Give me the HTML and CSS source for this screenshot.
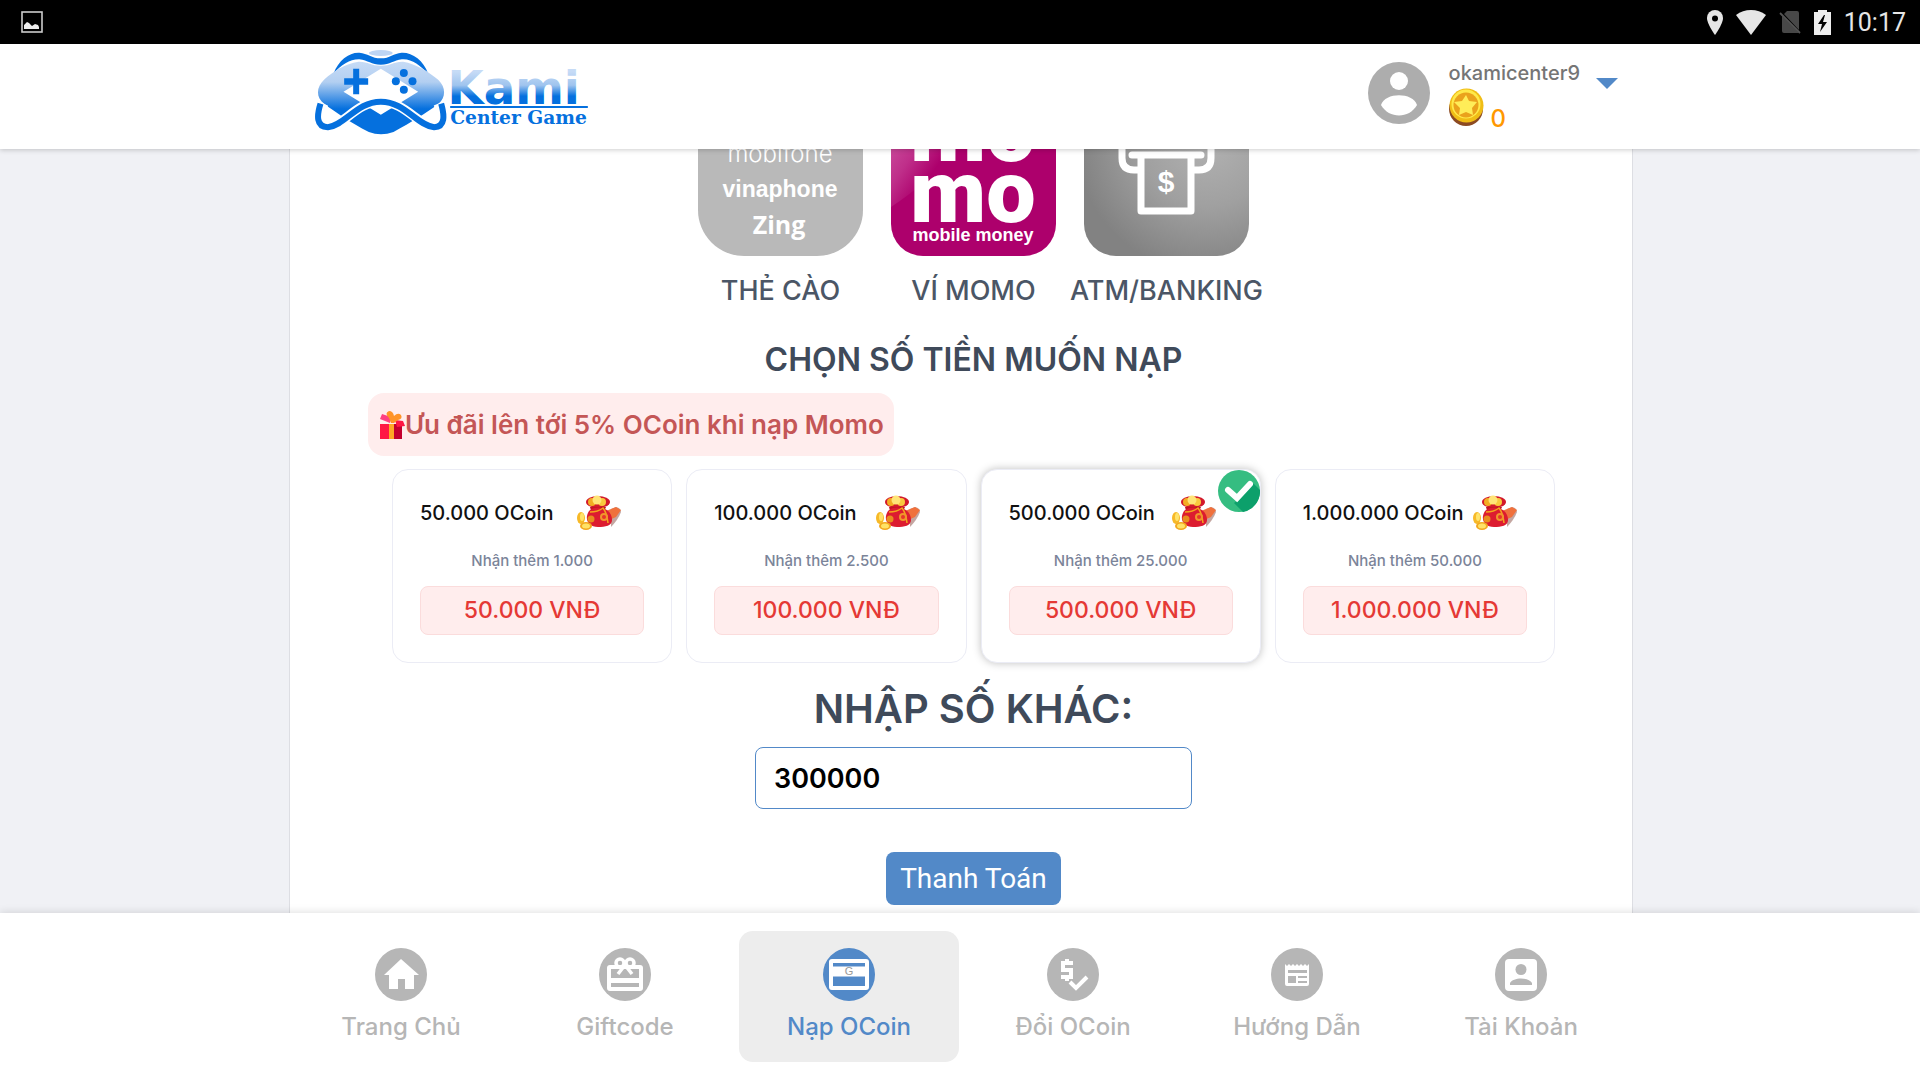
FILE: index.html
```html
<!DOCTYPE html>
<html lang="vi">

<head>
    <meta charset="UTF-8">
    <title>Nạp OCoin</title>
    <link rel="stylesheet" href="styles.css">
</head>

<body>
    <div class="status-bar">
        <svg width="22" height="22" viewBox="0 0 22 22">
            <rect x="1" y="1" width="20" height="20" fill="none" stroke="#ccc" stroke-width="1.6" />
            <path d="M3 18v-4l3-3 2 1 3 3 3-2 3 1 1 2v2z" fill="#eee" />
        </svg>
        <div class="status-right">
            <svg width="16" height="25" viewBox="0 0 16 25">
                <path d="M8 0a8 8 0 0 0-8 8c0 6 8 17 8 17s8-11 8-17a8 8 0 0 0-8-8z" fill="#e6e6e6" />
                <circle cx="8" cy="8.500" r="3" fill="#000" />
            </svg>
            <svg width="30" height="25" viewBox="0 0 30 25">
                <path d="M0 5a25 25 0 0 1 30 0L15 25z" fill="#e6e6e6" />
            </svg>
            <svg width="22" height="24" viewBox="0 0 22 24">
                <path d="M8 1h10a2 2 0 0 1 2 2v17L5 4zM3 6l17 17H5a2 2 0 0 1-2-2z" fill="#484848" />
                <path d="M1 3l20 20" stroke="#555" stroke-width="1.800" />
            </svg>
            <svg width="17" height="25" viewBox="0 0 17 25">
                <path d="M4 0h9v2h4v23H0V2h4z" fill="#eee" />
                <path d="M10 5l-6 9h4l-2 8 7-10H9l2-7z" fill="#000" />
            </svg>
            <span class="clock">10:17</span>
        </div>
    </div>

    <header class="header">
        <div class="header-inner">
            <a href="#" class="logo" aria-label="Okami Center Game">
                <svg width="277" height="85" viewBox="75 32 830 255">
                    <defs>
                        <linearGradient id="padFill" x1="0" y1="0" x2="0" y2="1">
                            <stop offset="0" stop-color="#c6dbf6" />
                            <stop offset=".28" stop-color="#b3cff1" />
                            <stop offset=".65" stop-color="#0570de" />
                            <stop offset="1" stop-color="#0570de" />
                        </linearGradient>
                        <linearGradient id="nameFill" x1="0" y1="0" x2="0" y2="1">
                            <stop offset=".2" stop-color="#c6dbf6" />
                            <stop offset=".45" stop-color="#9fc4ee" />
                            <stop offset=".65" stop-color="#0570de" />
                        </linearGradient>
                    </defs>
                    <ellipse cx="272" cy="41" rx="36" ry="9" fill="#bdd5f4" />
                    <path d="M130 103C145 62 178 38 208 40C232 42 245 57 272 57S310 42 334 40C365 38 400 62 414 103C390 78 363 57 335 60C310 63 300 76 272 76S233 63 208 60C180 59 153 76 130 103z" fill="#0570de" />
                    <path fill-rule="evenodd" d="M103 120C130 95 165 73 205 67C235 66 240 79 272 79S310 66 339 67C378 73 418 99 444 121C468 143 467 175 445 193C410 220 364 248 310 278Q272 292 236 278C180 249 138 220 102 193C78 175 76 145 103 120zM272 88L160 157L272 226L384 157z" fill="url(#padFill)" />
                    <path d="M101 193C85 225 77 265 115 264C165 255 200 187 272 187S380 255 432 264C468 263 458 225 444 193" fill="none" stroke="#fff" stroke-width="29" />
                    <path d="M91 193C80 228 77 262 113 264C165 258 200 187 272 187S380 258 432 264C466 262 463 228 453 193" fill="none" stroke="#0570de" stroke-width="18" />
                    <path d="M189 88h18v29h27v19h-27v29h-18v-29h-27v-19h27z" fill="#0570de" />
                    <g fill="#0570de">
                        <circle cx="341" cy="101" r="12" />
                        <circle cx="317" cy="126" r="12" />
                        <circle cx="367" cy="126" r="12" />
                        <circle cx="341" cy="151" r="12" />
                    </g>
                    <text x="472" y="194" class="logo-name" fill="url(#nameFill)">Kami</text>
                    <path d="M480 203H893" stroke="#0570de" stroke-width="6" />
                    <text x="480" y="255" class="logo-sub" fill="#0570de">Center Game</text>
                </svg>
            </a>
            <div class="user">
                <svg class="avatar" width="62" height="62" viewBox="0 0 62 62">
                    <circle cx="31" cy="31" r="31" fill="#adadad" />
                    <circle cx="31" cy="19" r="9" fill="#fff" />
                    <path d="M13 43c4-13 32-13 36 0-8 14-28 14-36 0z" fill="#fff" />
                </svg>
                <div class="user-info">
                    <span class="user-name">okamicenter9</span>
                    <div class="balance">
                        <svg width="35" height="39" viewBox="0 0 35 39">
                            <circle cx="17" cy="21" r="17" fill="#8c4a22" />
                            <circle cx="17.500" cy="17.500" r="17" fill="#f0bd16" />
                            <circle cx="17" cy="16" r="14.500" fill="#ffe94a" />
                            <circle cx="17" cy="17" r="12.500" fill="#eaa21c" />
                            <path d="M17 7l3 6 8 1-5 6 1 7-7-3-7 3 1-7-6-6 8-1z" fill="#ffed58" />
                        </svg>
                        <span>0</span>
                    </div>
                </div>
                <button type="button" class="caret" aria-label="Menu">
                    <svg width="22" height="11" viewBox="0 0 22 11">
                        <path d="M0 0h22L11 11z" fill="#5289c8" />
                    </svg>
                </button>
            </div>
        </div>
    </header>

    <svg width="0" height="0" class="symbols">
        <symbol id="bag" viewBox="0 0 44 36">
            <path d="M34 14l5-2q5 1 5 5-3 8-10 15z" fill="#9d6b63" opacity=".6" />
            <path d="M29 16l10-4 5 3-5 7-9 4z" fill="#f0713c" />
            <ellipse cx="21" cy="7" rx="12" ry="6" fill="#d3192b" />
            <path d="M13 12h16l-3 7H15z" fill="#c11424" />
            <circle cx="15" cy="7" r="4" fill="#f3ad23" />
            <circle cx="25" cy="7" r="4" fill="#f9c93e" />
            <circle cx="20" cy="5" r="4.500" fill="#ffe577" />
            <path d="M12 16C18 10 31 12 34 20c4 10-4 12-13 12-10 0-14-8-9-16z" fill="#dc1c30" />
            <path d="M13 17q8 0 13-4 4 5 5 15" fill="none" stroke="#f3a51c" stroke-width="1.500" />
            <circle cx="27" cy="22" r="4" fill="#f0952b" />
            <circle cx="27" cy="22" r="2" fill="#e8352a" />
            <ellipse cx="4" cy="23" rx="4" ry="6" fill="#f7b928" />
            <ellipse cx="5" cy="22" rx="2" ry="4" fill="#ffe46b" />
            <circle cx="14" cy="24" r="3.500" fill="#e98c1e" />
            <ellipse cx="9" cy="31" rx="6" ry="4" fill="#f2a81f" />
            <ellipse cx="9" cy="31" rx="4" ry="2.500" fill="#ffe266" />
        </symbol>
    </svg>

    <main class="main">
        <div class="panel">
            <div class="methods">
                <a href="#" class="method">
                    <svg width="165" height="165" viewBox="0 0 165 165">
                        <rect width="165" height="165" rx="46" fill="#b9b9b9" />
                        <g fill="#fff" text-anchor="middle">
                            <text x="82" y="71" class="t-mobi">mobifone</text>
                            <text x="82" y="106" class="t-vina">vinaphone</text>
                            <text x="81" y="143" class="t-zing">Zing</text>
                        </g>
                    </svg>
                    <span>THẺ CÀO</span>
                </a>
                <a href="#" class="method">
                    <svg width="165" height="165" viewBox="0 0 165 165">
                        <defs>
                            <linearGradient id="momoShine" x1="0" y1=".2" x2=".5" y2=".6">
                                <stop offset="0" stop-color="#d05ba5" />
                                <stop offset=".6" stop-color="#bf2f8a" />
                                <stop offset="1" stop-color="#ad006c" />
                            </linearGradient>
                        </defs>
                        <rect width="165" height="165" rx="32" fill="#ad006c" />
                        <path d="M0 32A32 32 0 0 1 32 0H100Q70 70 0 116z" fill="url(#momoShine)" />
                        <g fill="#fff" text-anchor="middle">
                            <text x="82" y="70" class="t-momo">mo</text>
                            <text x="82" y="131" class="t-momo">mo</text>
                            <text x="82" y="150" class="t-money">mobile money</text>
                        </g>
                    </svg>
                    <span>VÍ MOMO</span>
                </a>
                <a href="#" class="method">
                    <svg width="165" height="165" viewBox="0 0 165 165">
                        <defs>
                            <radialGradient id="atmFill" cx=".75" cy=".3" r=".8">
                                <stop offset="0" stop-color="#b2b2b2" />
                                <stop offset=".5" stop-color="#a0a0a0" />
                                <stop offset="1" stop-color="#828282" />
                            </radialGradient>
                        </defs>
                        <rect width="165" height="165" rx="32" fill="url(#atmFill)" />
                        <g fill="none" stroke="#fff" stroke-width="7" stroke-linecap="round" stroke-linejoin="round">
                            <path d="M56 79h-6Q38 79 38 67V40h89v27q0 12-12 12h-6" />
                            <path d="M48 64h69M57 64v56h50V64" />
                        </g>
                        <text x="82" y="101" class="t-dollar" fill="#fff" text-anchor="middle">$</text>
                    </svg>
                    <span>ATM/BANKING</span>
                </a>
            </div>

            <h2 class="title">CHỌN SỐ TIỀN MUỐN NẠP</h2>

            <div class="promo">
                <svg width="25" height="28" viewBox="0 0 25 28">
                    <path d="M0 13h9v15H0z" fill="#ff1744" />
                    <path d="M9 13h5v15H9z" fill="#ffa726" />
                    <path d="M14 13h8v15h-8z" fill="#c4002f" />
                    <path d="M2 3l9 3-1 6-10-4z" fill="#ff4081" />
                    <path d="M15 9l8 1 2 5-8 1z" fill="#ff1744" />
                    <path d="M11 12L9 7q-5-5 0-7 4 0 5 5 4-4 7-1 2 4-3 5l-4 3z" fill="#ff9427" />
                </svg>
                <span>Ưu đãi lên tới 5% OCoin khi nạp Momo</span>
            </div>

            <div class="cards">
                <button type="button" class="card">
                    <span class="card-head"><span>50.000 OCoin</span><svg width="44" height="36"><use href="#bag" /></svg></span>
                    <span class="card-bonus">Nhận thêm 1.000</span>
                    <span class="card-price">50.000 VNĐ</span>
                </button>
                <button type="button" class="card">
                    <span class="card-head"><span>100.000 OCoin</span><svg width="44" height="36"><use href="#bag" /></svg></span>
                    <span class="card-bonus">Nhận thêm 2.500</span>
                    <span class="card-price">100.000 VNĐ</span>
                </button>
                <button type="button" class="card active">
                    <svg class="check" width="42" height="42" viewBox="0 0 42 42">
                        <circle cx="21" cy="21" r="21" fill="#35bd81" />
                        <path d="M20 30L35 13l7 7a21 21 0 0 1-17 22l-9-9z" fill="#0ca06b" />
                        <path d="M10 20l9 8 13-14" fill="none" stroke="#fff" stroke-width="6" stroke-linecap="round" />
                    </svg>
                    <span class="card-head"><span>500.000 OCoin</span><svg width="44" height="36"><use href="#bag" /></svg></span>
                    <span class="card-bonus">Nhận thêm 25.000</span>
                    <span class="card-price">500.000 VNĐ</span>
                </button>
                <button type="button" class="card">
                    <span class="card-head"><span>1.000.000 OCoin</span><svg width="44" height="36"><use href="#bag" /></svg></span>
                    <span class="card-bonus">Nhận thêm 50.000</span>
                    <span class="card-price">1.000.000 VNĐ</span>
                </button>
            </div>

            <form class="other">
                <label for="amount">NHẬP SỐ KHÁC:</label>
                <input type="text" id="amount" value="300000">
                <button type="button" id="payBtn">Thanh Toán</button>
            </form>
        </div>
    </main>

    <nav class="nav">
        <a href="#" class="nav-item">
            <svg width="52" height="53" viewBox="0 0 52 53">
                <ellipse cx="26" cy="26.500" rx="26" ry="26.500" fill="currentColor" />
                <path d="M26 11l18 16h-5v14h-9V31h-7v10h-9V27H9z" fill="#fff" />
            </svg>
            <span>Trang Chủ</span>
        </a>
        <a href="#" class="nav-item">
            <svg width="52" height="53" viewBox="0 0 52 53">
                <ellipse cx="26" cy="26.500" rx="26" ry="26.500" fill="currentColor" />
                <rect x="10" y="19" width="32" height="22" rx="1" fill="none" stroke="#fff" stroke-width="4" />
                <path d="M10 32.500h32" stroke="#fff" stroke-width="5" />
                <g fill="none" stroke="#fff" stroke-width="3.500">
                    <circle cx="21" cy="15" r="4" />
                    <circle cx="31" cy="15" r="4" />
                    <path d="M26 17l-7 9M26 17l7 9" />
                </g>
            </svg>
            <span>Giftcode</span>
        </a>
        <a href="#" class="nav-item active">
            <svg width="52" height="53" viewBox="0 0 52 53">
                <ellipse cx="26" cy="26.500" rx="26" ry="26.500" fill="currentColor" />
                <rect x="8" y="13" width="36" height="27" rx="1" fill="none" stroke="#fff" stroke-width="4" />
                <path d="M8 23.500h36" stroke="#fff" stroke-width="10" />
                <text x="26" y="27" class="t-card" fill="#999" text-anchor="middle">G</text>
            </svg>
            <span>Nạp OCoin</span>
        </a>
        <a href="#" class="nav-item">
            <svg width="52" height="53" viewBox="0 0 52 53">
                <ellipse cx="26" cy="26.500" rx="26" ry="26.500" fill="currentColor" />
                <path d="M26 15H16v7h8v7H14M20 11v4M20 29v4" fill="none" stroke="#fff" stroke-width="4" />
                <path d="M23 34l6 6 11-11" fill="none" stroke="#fff" stroke-width="4" />
            </svg>
            <span>Đổi OCoin</span>
        </a>
        <a href="#" class="nav-item">
            <svg width="52" height="53" viewBox="0 0 52 53">
                <ellipse cx="26" cy="26.500" rx="26" ry="26.500" fill="currentColor" />
                <path d="M14 16l2 2 2-2 2 2 2-2 2 2 2-2 2 2 2-2 2 2 2-2 2 2 2-2v20q0 2-2 2H16q-2 0-2-2z" fill="#fff" />
                <path d="M17 22h19v3H17zM17 28h8v7h-8zM27 28h9v2h-9zM27 33h9v2h-9z" fill="currentColor" />
            </svg>
            <span>Hướng Dẫn</span>
        </a>
        <a href="#" class="nav-item">
            <svg width="52" height="53" viewBox="0 0 52 53">
                <ellipse cx="26" cy="26.500" rx="26" ry="26.500" fill="currentColor" />
                <rect x="10" y="11" width="32" height="32" rx="4" fill="#fff" />
                <circle cx="26" cy="21.500" r="5.500" fill="currentColor" />
                <path d="M15 37v-2c3-6 19-6 22 0v2z" fill="currentColor" />
            </svg>
            <span>Tài Khoản</span>
        </a>
    </nav>
</body>

</html>
```
FILE: styles.css
```css
* {
    padding: 0;
    margin: 0;
    box-sizing: border-box;
}

body {
    display: flex;
    flex-direction: column;
    height: 100vh;
    overflow: hidden;
    background-color: #f0f1f5;
    font-family: Inter, "Noto Sans", sans-serif;
    font-weight: 500;
    color: #3f4a5a;
}

a {
    color: inherit;
    text-decoration: none;
}

button {
    border: none;
    background: none;
    font: inherit;
    cursor: pointer;
}

svg {
    display: block;
    flex-shrink: 0;
}

.symbols {
    position: absolute;
}

/* status bar */
.status-bar {
    display: flex;
    align-items: center;
    justify-content: space-between;
    flex-shrink: 0;
    height: 44px;
    padding: 0 14px 0 21px;
    background-color: #000;
}

.status-right {
    display: flex;
    align-items: center;
    gap: 13px;
}

.clock {
    font-family: Roboto, sans-serif;
    font-weight: 400;
    font-size: 25px;
    color: #e6e6e6;
}

/* header */
.header {
    flex-shrink: 0;
    height: 105px;
    background-color: #fff;
    box-shadow: 0 1px 5px rgba(0, 0, 0, .2);
    z-index: 1;
}

.header-inner {
    display: flex;
    justify-content: space-between;
    max-width: 1344px;
    margin: 0 auto;
    padding: 6px 14px 0 27px;
}

.logo-name {
    font-family: "DejaVu Sans", sans-serif;
    font-weight: 700;
    font-size: 140px;
}

.logo-sub {
    font-family: "DejaVu Serif", serif;
    font-weight: 700;
    font-size: 56px;
}

.user {
    display: flex;
    align-items: flex-start;
    padding-top: 12px;
}

.user-info {
    margin: -1px 16px 0 19px;
}

.user-name {
    display: block;
    font-size: 20px;
    line-height: 24px;
    color: #757575;
}

.balance {
    display: flex;
    align-items: flex-end;
    gap: 7px;
    padding-top: 3px;
    font-size: 24px;
    line-height: 16px;
    color: #ff9800;
}

.caret {
    margin-top: 16px;
}

/* content */
.main {
    flex: 1;
    min-height: 0;
    padding-left: 2px;
    overflow: hidden;
}

.panel {
    max-width: 1344px;
    min-height: 100%;
    margin: -58px auto 0;
    padding: 0 53px 60px 78px;
    background-color: #fff;
    border: 1px solid #dddee3;
    border-width: 0 1px;
}

.methods {
    display: flex;
    justify-content: center;
}

.method {
    width: 193px;
    display: flex;
    flex-direction: column;
    align-items: center;
    gap: 20px;
    font-size: 27px;
    line-height: 30px;
    color: #4b5666;
    white-space: nowrap;
}

.title {
    margin: 32px 0 11px;
    font-size: 32px;
    font-weight: 600;
    line-height: 44px;
    text-align: center;
}

.promo {
    display: inline-flex;
    align-items: center;
    height: 63px;
    padding: 0 10px 0 12px;
    border-radius: 16px;
    background-color: #ffeded;
    font-size: 26px;
    font-weight: 600;
    color: #c45656;
}

.cards {
    display: grid;
    grid-template-columns: repeat(4, 1fr);
    gap: 14px;
    padding: 0 24px;
    margin-top: 13px;
}

.card {
    position: relative;
    padding: 25px 27px 27px;
    border: 1px solid #ebecf5;
    border-radius: 16px;
    background-color: #fff;
}

.card.active {
    box-shadow: 0 0 8px rgba(0, 0, 0, .25);
}

.check {
    position: absolute;
    top: 0;
    right: 0;
}

.card-head {
    display: flex;
    align-items: center;
    font-size: 20px;
    color: #111;
    white-space: nowrap;
}

.card-head svg {
    margin: 0 auto;
}

.card-bonus {
    display: block;
    margin: 19px 0 14px;
    font-size: 15px;
    line-height: 22px;
    color: #7b8499;
}

.card-price {
    display: block;
    border: 1px solid #fbdcdc;
    border-radius: 8px;
    background-color: #ffeded;
    font-size: 23px;
    line-height: 47px;
    color: #e53935;
}

.other {
    display: flex;
    flex-direction: column;
    align-items: center;
    margin-top: 21px;
}

.other label {
    font-size: 40px;
    font-weight: 600;
    line-height: 50px;
}

.other input {
    width: 437px;
    height: 62px;
    margin: 13px 0 43px;
    padding: 0 18px;
    border: 1px solid #5289c8;
    border-radius: 8px;
    outline: none;
    font: inherit;
    font-size: 27px;
    font-weight: 600;
    color: #000;
}

#payBtn {
    padding: 0 14px;
    border-radius: 8px;
    background-color: #5289c8;
    font-family: Roboto, sans-serif;
    font-weight: 400;
    font-size: 28px;
    line-height: 53px;
    color: #fff;
}

/* bottom menu */
.nav {
    display: flex;
    justify-content: center;
    gap: 4px;
    flex-shrink: 0;
    padding: 18px 0 18px 2px;
    background-color: #fff;
    box-shadow: 0 -1px 8px rgba(0, 0, 0, .12);
    z-index: 1;
}

.nav-item {
    display: flex;
    flex-direction: column;
    align-items: center;
    gap: 10px;
    width: 220px;
    height: 131px;
    padding-top: 17px;
    border-radius: 14px;
    font-size: 24px;
    line-height: 32px;
    color: #b6b6b6;
}

.nav-item.active {
    background-color: #ededed;
    color: #5289c8;
}

/* text inside the pictures */
.t-mobi {
    font-family: Inter, sans-serif;
    font-weight: 300;
    font-size: 24px;
}

.t-vina {
    font-family: "Liberation Sans", sans-serif;
    font-weight: 700;
    font-size: 23px;
}

.t-zing {
    font-family: "Open Sans", sans-serif;
    font-weight: 700;
    font-size: 25px;
}

.t-momo {
    font-family: Roboto, sans-serif;
    font-weight: 900;
    font-size: 88px;
}

.t-money {
    font-family: "Liberation Sans", sans-serif;
    font-weight: 700;
    font-size: 18px;
}

.t-dollar {
    font-family: "Liberation Sans", sans-serif;
    font-weight: 700;
    font-size: 30px;
}

.t-card {
    font-family: "Liberation Sans", sans-serif;
    font-size: 11px;
}
```
